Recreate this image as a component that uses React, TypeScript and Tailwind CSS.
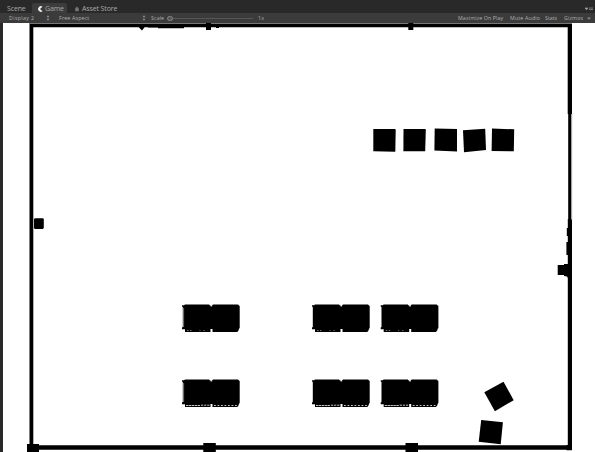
import React from "react";

const desks = [
  { x: 182, y: 305, low: false, shade: true },
  { x: 312, y: 305, low: false, shade: false },
  { x: 380.7, y: 305, low: false, shade: false },
  { x: 182, y: 380, low: true, shade: true },
  { x: 312, y: 380, low: true, shade: false },
  { x: 380.7, y: 380, low: true, shade: false },
];

function Desk({ x, y, low, shade }: { x: number; y: number; low: boolean; shade: boolean }) {
  return (
    <g transform={`translate(${x} ${y})`}>
      <path d="M0 .3h2l1-.8h24l1 1h2l1-1h25l1 1 .7.4v22l-.9 1v1l-1.5 2H30.5v-3h-2V27H3v-2.7H0v-1.8L.8 22V2L0 1.5z" />
      <path d="M28.5-.6h1.6v2h-1.6z" fill="#eee" />
      {shade && <path d="M1.6 3v19" stroke="#858585" strokeWidth=".9" />}
      {low ? (
        <g stroke="#ddd" strokeWidth=".9">
          <path d="M4 25.5h14" strokeDasharray="2.4 .5" />
          <path d="M19 25.2h9" strokeDasharray="2.2 .9" />
          <path d="M32 25.5h23" strokeDasharray="1.8 1.7" />
        </g>
      ) : (
        <path d="M5 25.6h1.7m1.3 0h1.5m8 0h1m3 0h1.3" stroke="#aaa" strokeWidth=".7" />
      )}
    </g>
  );
}

function Scene() {
  return (
    <svg className="block h-[429px] w-[592px]" viewBox="3 23 592 429" fill="black">
      <path d="M29 23.5h543" stroke="#777" />
      <path d="M29.5 24H572v3.3H33.3V445.3H570v4.5H28V444h1.5z" />
      <path d="M567.7 24h4.3v90h-4.3zM568.2 113h3.1v107h-3.1zM567.8 219h4.2v231h-4.2z" />
      <path d="M571.7 114v106" stroke="#999" strokeWidth=".7" />
      <path d="M206 23h5v7h-5zM408.3 23h5v7h-5zM138 26h7l-1 2-2 2.5-2.5-2.5zM148 27h36v1.2h-26v-.6h-10zM216 27h3v1h-3z" />
      <path d="M34 219l1-.7h8l.8.8v8.8l-1 1h-8l-.8-1z" />
      <path d="M568 228h-1.2v8h1.2zm0 14h-1.6v13h1.6zm0 22h-4v1h-6.3v10h6.3v1l3 .5 1 1.5z" />
      <path d="M27 444h12v8H27zM203.3 443h12.5v9h-12.5zM405.5 443h12.5v9h-12.5zM566.5 445h5.5v5.3h-5.5z" />
      <path d="M373.3 129h22l.4 1-.4 21.8-22-.5z" />
      <path d="M403.5 129h22l.3 1-.6 21.3h-21.8z" />
      <path d="M434.7 128.5l22.3.6v22.3l-22.6-.8z" />
      <path d="M463 130.2l22.2-1.4.8 21.2-22 2.2z" />
      <path d="M492 128.6l22.2.7-.4 22-22.2-.3z" />
      {desks.map((d) => (
        <Desk key={`${d.x}-${d.y}`} {...d} />
      ))}
      <path d="M484.3 392.2l19.2-10.5 10.2 18.5-18.8 11z" />
      <path d="M481.2 420l21.7 2.2-2.2 22-22-2.4z" />
    </svg>
  );
}

function Stepper({ className }: { className: string }) {
  return (
    <svg viewBox="0 0 4 6" className={`h-[6px] w-[4px] shrink-0 ${className}`} fill="#999">
      <path d="M2 .3l1.3 2H.7zM2 5.7l1.3-2H.7z" />
    </svg>
  );
}

export default function App() {
  return (
    <div className="flex h-[452px] w-[595px] flex-col overflow-hidden bg-[#292929] font-['Open_Sans','Noto_Sans',sans-serif] whitespace-nowrap">
      <header className="flex h-[13px] shrink-0 items-end bg-[#292929] text-[7px] leading-[9px] text-[#aaa]">
        <div className="ml-[7px] w-[25px] tracking-[-0.15px]">Scene</div>
        <div className="flex h-[10px] w-[35px] items-center rounded-t-[2px] bg-[#3c3c3c] pt-px pl-[5px]">
          <svg viewBox="0 0 6 6" className="mr-[2px] h-[6px] w-[6px]">
            <path d="M5.5.7A2.8 2.8 0 1 0 5.5 5.3L3 3z" fill="#eee" />
          </svg>
          <span className="tracking-[-0.15px]">Game</span>
        </div>
        <div className="flex items-center pl-[8px]">
          <svg viewBox="0 0 5 6" className="mr-[3px] h-[6px] w-[4px]">
            <path d="M.5 2h4v3.6h-4zM1.4 2V.7h2V2" fill="#777" stroke="#777" strokeWidth=".5" />
          </svg>
          <span className="tracking-[-0.12px]">Asset Store</span>
        </div>
        <svg viewBox="0 0 8 5" className="mr-[2px] mb-[1px] ml-auto h-[5px] w-[8px]">
          <path d="M0 1h3L1.5 2.8zM4 1h4M4 2.5h4" fill="#aaa" stroke="#999" strokeWidth=".7" />
        </svg>
      </header>

      <div className="flex h-[10px] shrink-0 items-center bg-[#3b3b3b] text-[5.3px] leading-[10px] text-[#b0b0b0]">
        <div className="ml-[9px] w-[37px] tracking-[0.35px]">Display 2</div>
        <Stepper className="mr-[9px]" />
        <div className="w-[83px] tracking-[0.15px]">Free Aspect</div>
        <Stepper className="mr-[5px]" />
        <div className="w-[16px] tracking-[0.1px]">Scale</div>
        <div className="h-[5px] w-[6px] rounded-full border border-[#888] bg-[#555]" />
        <div className="h-px w-[80px] bg-[#555]" />
        <div className="ml-[5px] tracking-[0.3px]">1x</div>
        <div className="ml-auto w-[52px] tracking-[0.1px]">Maximize On Play</div>
        <div className="w-[35px] tracking-[0.15px]">Mute Audio</div>
        <div className="w-[19px]">Stats</div>
        <div className="w-[23px] tracking-[0.15px]">Gizmos</div>
        <svg viewBox="0 0 4 3" className="mr-[4px] h-[3px] w-[4px]" fill="#888">
          <path d="M0 .5h4L2 2.8z" />
        </svg>
      </div>

      <main className="h-[429px] border-l-[3px] border-[#292929] bg-white">
        <Scene />
      </main>
    </div>
  );
}
